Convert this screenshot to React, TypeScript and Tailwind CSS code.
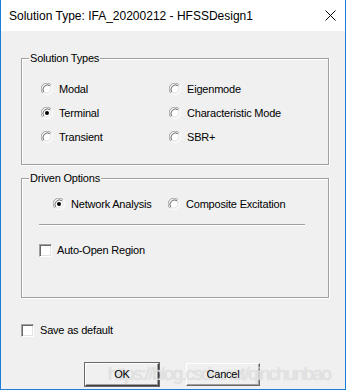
import React from 'react';

const Radio: React.FC<{ checked?: boolean }> = ({ checked }) => (
  <svg width="12" height="12" viewBox="0 0 12 12" className="shrink-0">
    <circle cx="6" cy="6" r="4.5" fill="#fff" />
    <path d="M1.8 10.2 A5.9 5.9 0 0 1 10.2 1.8" stroke="#a0a0a0" fill="none" strokeWidth="1" />
    <path d="M10.2 1.8 A5.9 5.9 0 0 1 1.8 10.2" stroke="#fff" fill="none" strokeWidth="1" />
    <path d="M2.8 9.2 A4.6 4.6 0 0 1 9.2 2.8" stroke="#696969" fill="none" strokeWidth="1" />
    <path d="M9.2 2.8 A4.6 4.6 0 0 1 2.8 9.2" stroke="#e3e3e3" fill="none" strokeWidth="1" />
    {checked && <circle cx="6" cy="6" r="2" fill="#000" />}
  </svg>
);

const Check: React.FC = () => (
  <div className="w-[13px] h-[13px] shrink-0 bg-white border border-t-[#a0a0a0] border-l-[#a0a0a0] border-b-white border-r-white shadow-[inset_1px_1px_0_#696969,inset_-1px_-1px_0_#e3e3e3]" />
);

const Option: React.FC<{ label: string; checked?: boolean; className?: string }> = ({ label, checked, className }) => (
  <div className={`flex items-center gap-[6px] h-[24px] ${className ?? ''}`}>
    <Radio checked={checked} />
    <span>{label}</span>
  </div>
);

const Group: React.FC<{ title: string; className?: string; children: React.ReactNode }> = ({ title, className, children }) => (
  <div className={`relative border border-[#a0a0a0] shadow-[inset_1px_1px_0_#fff,1px_1px_0_#fff] ${className ?? ''}`}>
    <span className="absolute left-[7px] -top-[8px] bg-[#f0f0f0] px-[1px] leading-[14px]">{title}</span>
    {children}
  </div>
);

export default function App() {
  return (
    <div className="w-[346px] h-[390px] flex flex-col border-l border-r border-b border-[#1a7fd4] bg-white text-black font-['Liberation_Sans',Arial,sans-serif] text-[11px] tracking-[-0.2px]">
      {/* Title bar */}
      <div className="h-[31px] flex items-center justify-between pl-[8px] pr-[9px] bg-white">
        <span className="text-[12px] tracking-normal">Solution Type: IFA_20200212 - HFSSDesign1</span>
        <svg width="11" height="11" viewBox="0 0 11 11">
          <path d="M0.5 0.5 L10.5 10.5 M10.5 0.5 L0.5 10.5" stroke="#000" strokeWidth="1" />
        </svg>
      </div>

      {/* Body */}
      <div className="relative flex-1 bg-[#f0f0f0] pl-[20px] pt-[27px]">
        <Group title="Solution Types" className="w-[308px] h-[107px]">
          <div className="grid grid-cols-[128px_1fr] pl-[19px] pt-[18px]">
            <Option label="Modal" />
            <Option label="Eigenmode" />
            <Option label="Terminal" checked />
            <Option label="Characteristic Mode" />
            <Option label="Transient" />
            <Option label="SBR+" />
          </div>
        </Group>

        <Group title="Driven Options" className="w-[308px] h-[120px] mt-[13px]">
          <div className="flex pl-[31px] pt-[13px]">
            <Option label="Network Analysis" checked className="w-[115px]" />
            <Option label="Composite Excitation" />
          </div>
          <div className="ml-[17px] mt-[8px] w-[266px] h-[2px] border-t border-[#a0a0a0] border-b border-b-white" />
          <div className="flex items-center gap-[5px] ml-[17px] mt-[16px]">
            <Check />
            <span>Auto-Open Region</span>
          </div>
        </Group>

        <div className="flex items-center gap-[6px] mt-[24px]">
          <Check />
          <span>Save as default</span>
        </div>

        <div className="flex gap-[27px] ml-[64px] mt-[24px]">
          <button className="w-[74px] h-[23px] bg-[#f0f0f0] border border-t-white border-l-white border-b-[#404040] border-r-[#404040] shadow-[inset_-1px_-1px_0_#a0a0a0] outline outline-1 outline-[#696969]">
            <span className="relative z-10">OK</span>
          </button>
          <button className="w-[74px] h-[23px] bg-[#f0f0f0] border border-t-white border-l-white border-b-[#696969] border-r-[#696969] shadow-[inset_-1px_-1px_0_#a0a0a0]">
            <span className="relative z-10">Cancel</span>
          </button>
        </div>

        {/* watermark overlay */}
        <span className="absolute left-[107px] top-[329px] text-[19px] tracking-[-1.6px] text-white/40 [text-shadow:0_0_1px_#c8c8c8] select-none pointer-events-none">
          https://blog.csdn.net/qinchunbao
        </span>
      </div>
    </div>
  );
}
